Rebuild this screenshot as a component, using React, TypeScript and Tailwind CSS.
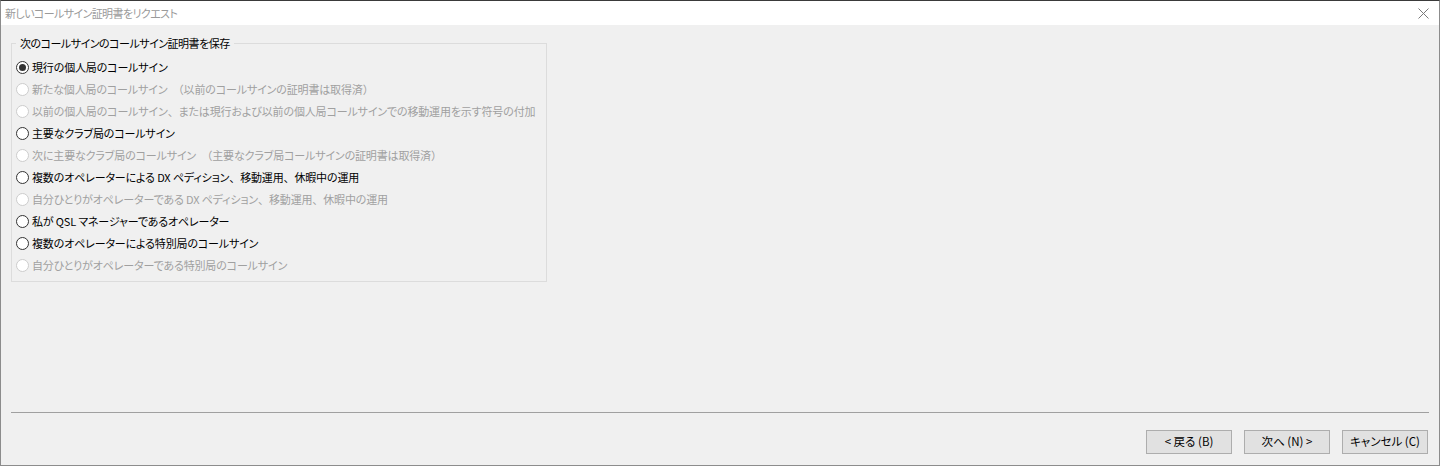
import React from "react";

const FONT = "font-['Noto_Sans_CJK_JP','Noto_Sans',sans-serif] [font-feature-settings:'palt']";

type Item = { label: string; enabled: boolean; checked?: boolean };

const items: Item[] = [
  { label: "現行の個人局のコールサイン", enabled: true, checked: true },
  { label: "新たな個人局のコールサイン\u3000（以前のコールサインの証明書は取得済）", enabled: false },
  { label: "以前の個人局のコールサイン、または現行および以前の個人局コールサインでの移動運用を示す符号の付加", enabled: false },
  { label: "主要なクラブ局のコールサイン", enabled: true },
  { label: "次に主要なクラブ局のコールサイン\u3000（主要なクラブ局コールサインの証明書は取得済）", enabled: false },
  { label: "複数のオペレーターによる DX ペディション、移動運用、休暇中の運用", enabled: true },
  { label: "自分ひとりがオペレーターである DX ペディション、移動運用、休暇中の運用", enabled: false },
  { label: "私が QSL マネージャーであるオペレーター", enabled: true },
  { label: "複数のオペレーターによる特別局のコールサイン", enabled: true },
  { label: "自分ひとりがオペレーターである特別局のコールサイン", enabled: false },
];

function Label({ text }: { text: string }) {
  const parts = text.split(/([、（）\u3000])/);
  return (
    <>
      {parts.map((p, i) =>
        /^[、（）\u3000]$/.test(p) ? (
          <span key={i} className="[font-feature-settings:normal]">{p}</span>
        ) : (
          <span key={i}>{p}</span>
        )
      )}
    </>
  );
}

function Radio({ enabled, checked }: { enabled: boolean; checked?: boolean }) {
  return (
    <svg width="13" height="13" viewBox="0 0 13 13" className="shrink-0">
      <circle cx="6.5" cy="6.5" r="6" fill="#ffffff" stroke={enabled ? "#333333" : "#cccccc"} strokeWidth="1" />
      {checked && <circle cx="6.5" cy="6.5" r="3.5" fill="#333333" />}
    </svg>
  );
}

function Button({ children }: { children: React.ReactNode }) {
  return (
    <button className={`w-[86px] h-[24px] bg-[#e1e1e1] border border-[#adadad] text-[11.5px] text-black leading-none flex items-center justify-center ${FONT}`}>
      {children}
    </button>
  );
}

export default function App() {
  return (
    <div className={`w-[1440px] h-[466px] flex flex-col bg-[#f0f0f0] border-t border-t-[#3a3a3a] border-x border-x-[#8c8c8c] border-b border-b-[#8c8c8c] ${FONT}`}>
      <div className="h-[24px] bg-white flex items-center justify-between shrink-0">
        <span className="pl-[4px] text-[11px] text-[#9a9a9a] tracking-[-0.6px]">新しいコールサイン証明書をリクエスト</span>
        <svg width="11" height="11" viewBox="0 0 11 11" className="mr-[10px]">
          <path d="M0.5 0.5 L10.5 10.5 M10.5 0.5 L0.5 10.5" stroke="#7a7a7a" strokeWidth="1" />
        </svg>
      </div>
      <div className="flex-1 flex flex-col">
        <fieldset className="ml-[10px] mt-[10px] w-[536px] min-w-0 border border-[#dcdcdc] px-[4px] pt-[5px] pb-[5px]">
          <legend className="px-[4px] text-[11px] leading-[16px] text-black tracking-[-0.5px]">次のコールサインのコールサイン証明書を保存</legend>
          <div className="flex flex-col">
            {items.map((it, i) => (
              <div key={i} className="h-[22px] flex items-center gap-[3px]">
                <Radio enabled={it.enabled} checked={it.checked} />
                <span className={`text-[11px] leading-none whitespace-pre tracking-[-0.15px] ${it.enabled ? "text-black" : "text-[#a0a0a0]"}`}>
                  <Label text={it.label} />
                </span>
              </div>
            ))}
          </div>
        </fieldset>
        <div className="flex-1" />
        <div className="mx-[10px] h-px bg-[#a0a0a0]" />
        <div className="flex justify-end gap-[12px] pr-[11px] pt-[17px] pb-[11px]">
          <Button>&lt; 戻る (B)</Button>
          <Button>次へ (N) &gt;</Button>
          <Button>キャンセル (C)</Button>
        </div>
      </div>
    </div>
  );
}
